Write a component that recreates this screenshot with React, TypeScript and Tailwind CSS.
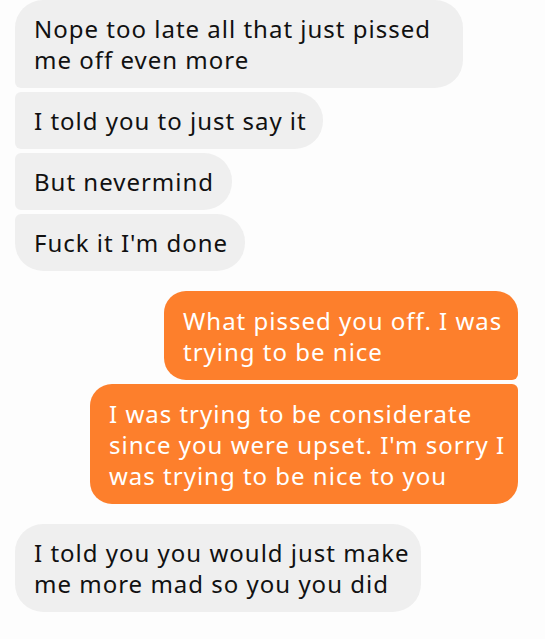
const font = { fontFamily: '"Noto Sans", "Open Sans", sans-serif' };

type Msg = {
  lines: string[];
  w: string;
  corners: string;
  mine?: boolean;
};

const groups: Msg[][] = [
  [
    { lines: ["Nope too late all that just pissed", "me off even more"], w: "w-[448px]", corners: "rounded-[28px] rounded-bl-[6px]" },
    { lines: ["I told you to just say it"], w: "w-[308px]", corners: "rounded-[28px] rounded-tl-[6px] rounded-bl-[6px]" },
    { lines: ["But nevermind"], w: "w-[217px]", corners: "rounded-[28px] rounded-tl-[6px] rounded-bl-[6px]" },
    { lines: ["Fuck it I'm done"], w: "w-[230px]", corners: "rounded-[28px] rounded-tl-[6px]" },
  ],
  [
    { lines: ["What pissed you off. I was", "trying to be nice"], w: "w-[354px]", corners: "rounded-[22px] rounded-br-[6px]", mine: true },
    { lines: ["I was trying to be considerate", "since you were upset. I'm sorry I", "was trying to be nice to you"], w: "w-[428px]", corners: "rounded-[22px] rounded-tr-[6px]", mine: true },
  ],
  [
    { lines: ["I told you you would just make", "me more mad so you you did"], w: "w-[406px]", corners: "rounded-[28px]" },
  ],
];

function Bubble({ m }: { m: Msg }) {
  return (
    <div
      className={`${m.w} ${m.corners} px-[19px] text-[24px] tracking-[1px] leading-[31px] whitespace-nowrap ${
        m.mine ? "self-end py-[13.5px] bg-[#fd7f2c] text-white" : "self-start py-[13px] bg-[#efefef] text-[#111]"
      }`}
    >
      {m.lines.map((l, i) => (
        <div key={i}>{l}</div>
      ))}
    </div>
  );
}

export default function App() {
  return (
    <div className="w-[545px] h-[639px] bg-[#fdfdfd] overflow-hidden pl-[15px] pr-[27px]" style={font}>
      <div className="flex flex-col gap-[20px]">
        {groups.map((g, gi) => (
          <div key={gi} className="flex flex-col gap-[4px]">
            {g.map((m, i) => (
              <Bubble key={i} m={m} />
            ))}
          </div>
        ))}
      </div>
    </div>
  );
}
